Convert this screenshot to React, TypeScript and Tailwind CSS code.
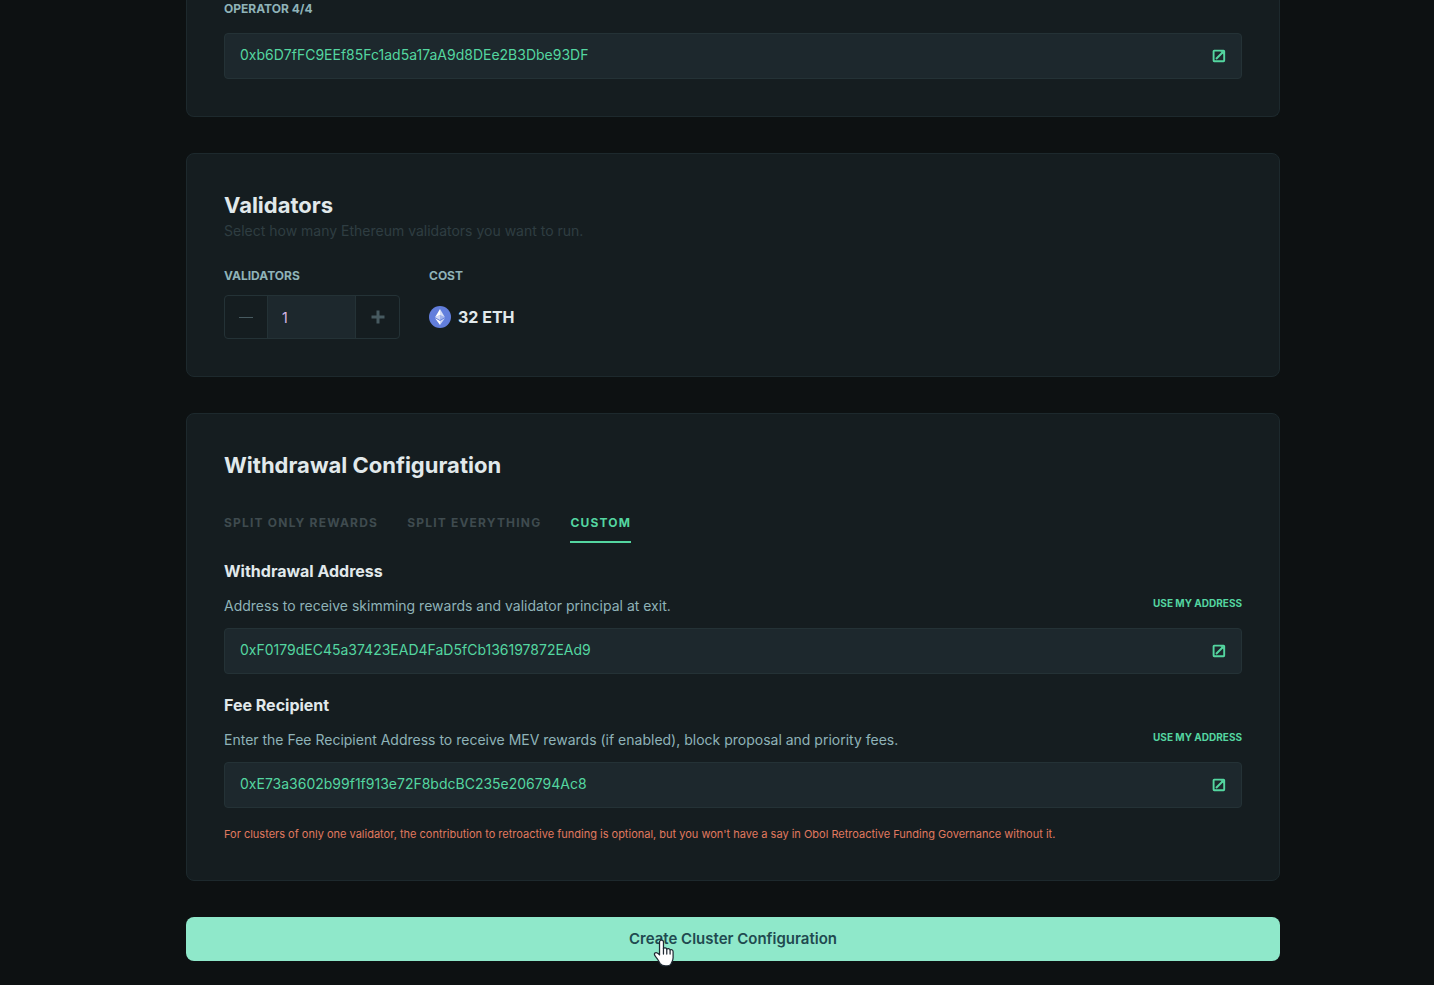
import React from 'react';
import { clsx } from 'clsx';

const TABS = [
  { id: 'rewards', label: 'SPLIT ONLY REWARDS' },
  { id: 'everything', label: 'SPLIT EVERYTHING' },
  { id: 'custom', label: 'CUSTOM' },
];

const ETH_PER_VALIDATOR = 32;

const ExternalIcon = () => (
  <svg width="14" height="14" viewBox="0 0 14 14" fill="none">
    <rect x="1.6" y="1.6" width="10.6" height="10.6" rx="0.6" stroke="#54d6a0" strokeWidth="1.9" />
    <path d="M8.200 2.200h3.600v3.600z" fill="#54d6a0" />
    <path d="M4 10 11 3" stroke="#54d6a0" strokeWidth="2" />
  </svg>
);

const EthIcon = () => (
  <svg width="22" height="22" viewBox="0 0 22 22">
    <circle cx="11" cy="11" r="11" fill="#627edc" />
    <path d="M11 3v5.9l4.9 2.3z" fill="#fff" fillOpacity="0.75" />
    <path d="M11 3 6.1 11.2 11 8.9z" fill="#fff" />
    <path d="M11 8.9v5.2l4.9-2.9z" fill="#fff" fillOpacity="0.4" />
    <path d="M6.1 11.2 11 14.1V8.9z" fill="#fff" fillOpacity="0.7" />
    <path d="M11 15.1V19l4.9-6.8z" fill="#fff" fillOpacity="0.7" />
    <path d="M11 19v-3.9l-4.9-2.9z" fill="#fff" />
  </svg>
);

const HandPointer = () => (
  <svg className="pointer-events-none absolute top-[22px] left-1/2 -ml-20" width="23" height="29" viewBox="0 0 22 28">
    <path
      d="M6.2 3c0-2.600 3.800-2.600 3.800 0v6.200c.6-1 2.900-.8 3.200.6.800-1 2.900-.6 3.200.8.900-.8 2.900-.3 2.900 1.600v6c0 2.800-1.300 4-1.900 5.600-.5 1.300-2.300 2.200-5.200 2.200-3.200 0-4.500-.9-5.400-2.300-1.300-2.500-2.200-4.200-4.400-6.700-1.100-1.300-1.500-2.600-.6-3.400 1.200-1 3.200.2 4.400 1.800z"
      fill="#fff"
      stroke="#1f2a33"
      strokeWidth="1.2"
      strokeLinejoin="round"
    />
    <path d="M10 9v5.500M13.200 10v4.500M16.400 11v3.500" stroke="#1f2a33" strokeWidth="1.200" strokeLinecap="round" />
  </svg>
);

const Card = ({ className, children }: { className?: string; children: React.ReactNode }) => (
  <section className={clsx('border border-[#1d292d] bg-[#151d20] px-[37px] pb-[37px]', className)}>{children}</section>
);

interface AddressInputProps {
  id: string;
  value: string;
  onChange: (value: string) => void;
}

const AddressInput = ({ id, value, onChange }: AddressInputProps) => (
  <div className="flex h-[46px] items-center rounded border border-[#243236] bg-[#1d282d] px-[15px]">
    <input
      id={id}
      type="text"
      value={value}
      spellCheck={false}
      onChange={(e) => onChange(e.target.value)}
      className="min-w-0 flex-1 bg-transparent pb-1 text-[14px] text-[#54d6a0] outline-none"
    />
    <a href="#explorer" aria-label="View on explorer">
      <ExternalIcon />
    </a>
  </div>
);

interface AddressFieldProps extends AddressInputProps {
  title: string;
  description: string;
}

const AddressField = ({ title, description, ...input }: AddressFieldProps) => (
  <div>
    <h3 className="text-[16px] leading-6 font-bold text-[#e1e9eb]">
      <label htmlFor={input.id}>{title}</label>
    </h3>
    <div className="mt-[11px] mb-2.5 flex items-start justify-between gap-4">
      <p className="text-[14px] leading-6 text-[#8fb3b8]">{description}</p>
      <button type="button" className="shrink-0 text-[10px] leading-[18px] font-bold text-[#54d6a0]">
        USE MY ADDRESS
      </button>
    </div>
    <AddressInput {...input} />
  </div>
);

export default function App() {
  const [operator, setOperator] = React.useState('0xb6D7fFC9EEf85Fc1ad5a17aA9d8DEe2B3Dbe93DF');
  const [withdrawal, setWithdrawal] = React.useState('0xF0179dEC45a37423EAD4FaD5fCb136197872EAd9');
  const [feeRecipient, setFeeRecipient] = React.useState('0xE73a3602b99f1f913e72F8bdcBC235e206794Ac8');
  const [validators, setValidators] = React.useState(1);
  const [tab, setTab] = React.useState('custom');

  return (
    <div className="min-h-screen bg-[#0d1112] pl-8 font-['Inter',sans-serif]">
      <main className="mx-auto flex max-w-[1094px] flex-col gap-9 pb-6">
        <Card className="rounded-b-lg border-t-0">
          <label htmlFor="operator" className="mb-[15px] block text-[12px] leading-[18px] font-bold text-[#8fb3b8]">
            OPERATOR 4/4
          </label>
          <AddressInput id="operator" value={operator} onChange={setOperator} />
        </Card>

        <Card className="rounded-lg pt-[37px]">
          <h2 className="text-[22px] leading-7 font-bold text-[#e1e9eb]">Validators</h2>
          <p className="text-[14px] leading-6 text-[#2f3d42]">Select how many Ethereum validators you want to run.</p>
          <div className="mt-6 flex gap-[29px]">
            <div>
              <label htmlFor="validators" className="mb-2.5 block text-[12px] leading-[18px] font-bold text-[#8fb3b8]">
                VALIDATORS
              </label>
              <div className="flex h-11 w-44 rounded-sm border border-[#243236]">
                <button
                  type="button"
                  aria-label="Remove validator"
                  onClick={() => setValidators(Math.max(1, validators - 1))}
                  className="flex w-[42px] items-center justify-center"
                >
                  <svg width="14" height="14" viewBox="0 0 14 14">
                    <path d="M0 7.500h14" stroke="#475a60" />
                  </svg>
                </button>
                <input
                  id="validators"
                  type="text"
                  inputMode="numeric"
                  value={validators}
                  onChange={(e) => setValidators(Number(e.target.value) || 1)}
                  className="min-w-0 flex-1 border-x border-[#243236] bg-[#1d282d] px-3.5 text-[14px] text-[#d9b8e8] outline-none"
                />
                <button
                  type="button"
                  aria-label="Add validator"
                  onClick={() => setValidators(validators + 1)}
                  className="flex w-[43px] items-center justify-center"
                >
                  <svg width="14" height="14" viewBox="0 0 14 14">
                    <path d="M.5 7h13M7 .5v13" stroke="#475a60" strokeWidth="3" />
                  </svg>
                </button>
              </div>
            </div>
            <div>
              <p className="mb-2.5 text-[12px] leading-[18px] font-bold text-[#8fb3b8]">COST</p>
              <div className="flex h-11 items-center gap-[7px]">
                <EthIcon />
                <span className="text-[16px] font-bold text-[#e1e9eb]">{validators * ETH_PER_VALIDATOR} ETH</span>
              </div>
            </div>
          </div>
        </Card>

        <Card className="rounded-lg pt-[37px]">
          <h2 className="text-[22px] leading-7 font-bold text-[#e1e9eb]">Withdrawal Configuration</h2>
          <div role="tablist" className="mt-[34px] mb-4 flex gap-[29px]">
            {TABS.map((t) => (
              <button
                key={t.id}
                type="button"
                role="tab"
                aria-selected={tab === t.id}
                onClick={() => setTab(t.id)}
                className={clsx(
                  'border-b-2 pb-2 text-[12px] leading-5 font-bold tracking-widest',
                  tab === t.id ? 'border-[#54d6a0] text-[#54d6a0]' : 'border-transparent text-[#3f4b4f]'
                )}
              >
                {t.label}
              </button>
            ))}
          </div>
          <div className="flex flex-col gap-[19px]">
            <AddressField
              id="withdrawal"
              title="Withdrawal Address"
              description="Address to receive skimming rewards and validator principal at exit."
              value={withdrawal}
              onChange={setWithdrawal}
            />
            <AddressField
              id="fee-recipient"
              title="Fee Recipient"
              description="Enter the Fee Recipient Address to receive MEV rewards (if enabled), block proposal and priority fees."
              value={feeRecipient}
              onChange={setFeeRecipient}
            />
          </div>
          <p className="mt-[17px] text-[11px] leading-[18px] text-[#e0795f]">
            For clusters of only one validator, the contribution to retroactive funding is optional, but you won't have a say in
            Obol Retroactive Funding Governance without it.
          </p>
        </Card>

        <button
          type="button"
          className="relative h-11 rounded-lg bg-[#8fe8ca] text-[15px] font-semibold text-[#1f4a50]"
        >
          Create Cluster Configuration
          <HandPointer />
        </button>
      </main>
    </div>
  );
}
